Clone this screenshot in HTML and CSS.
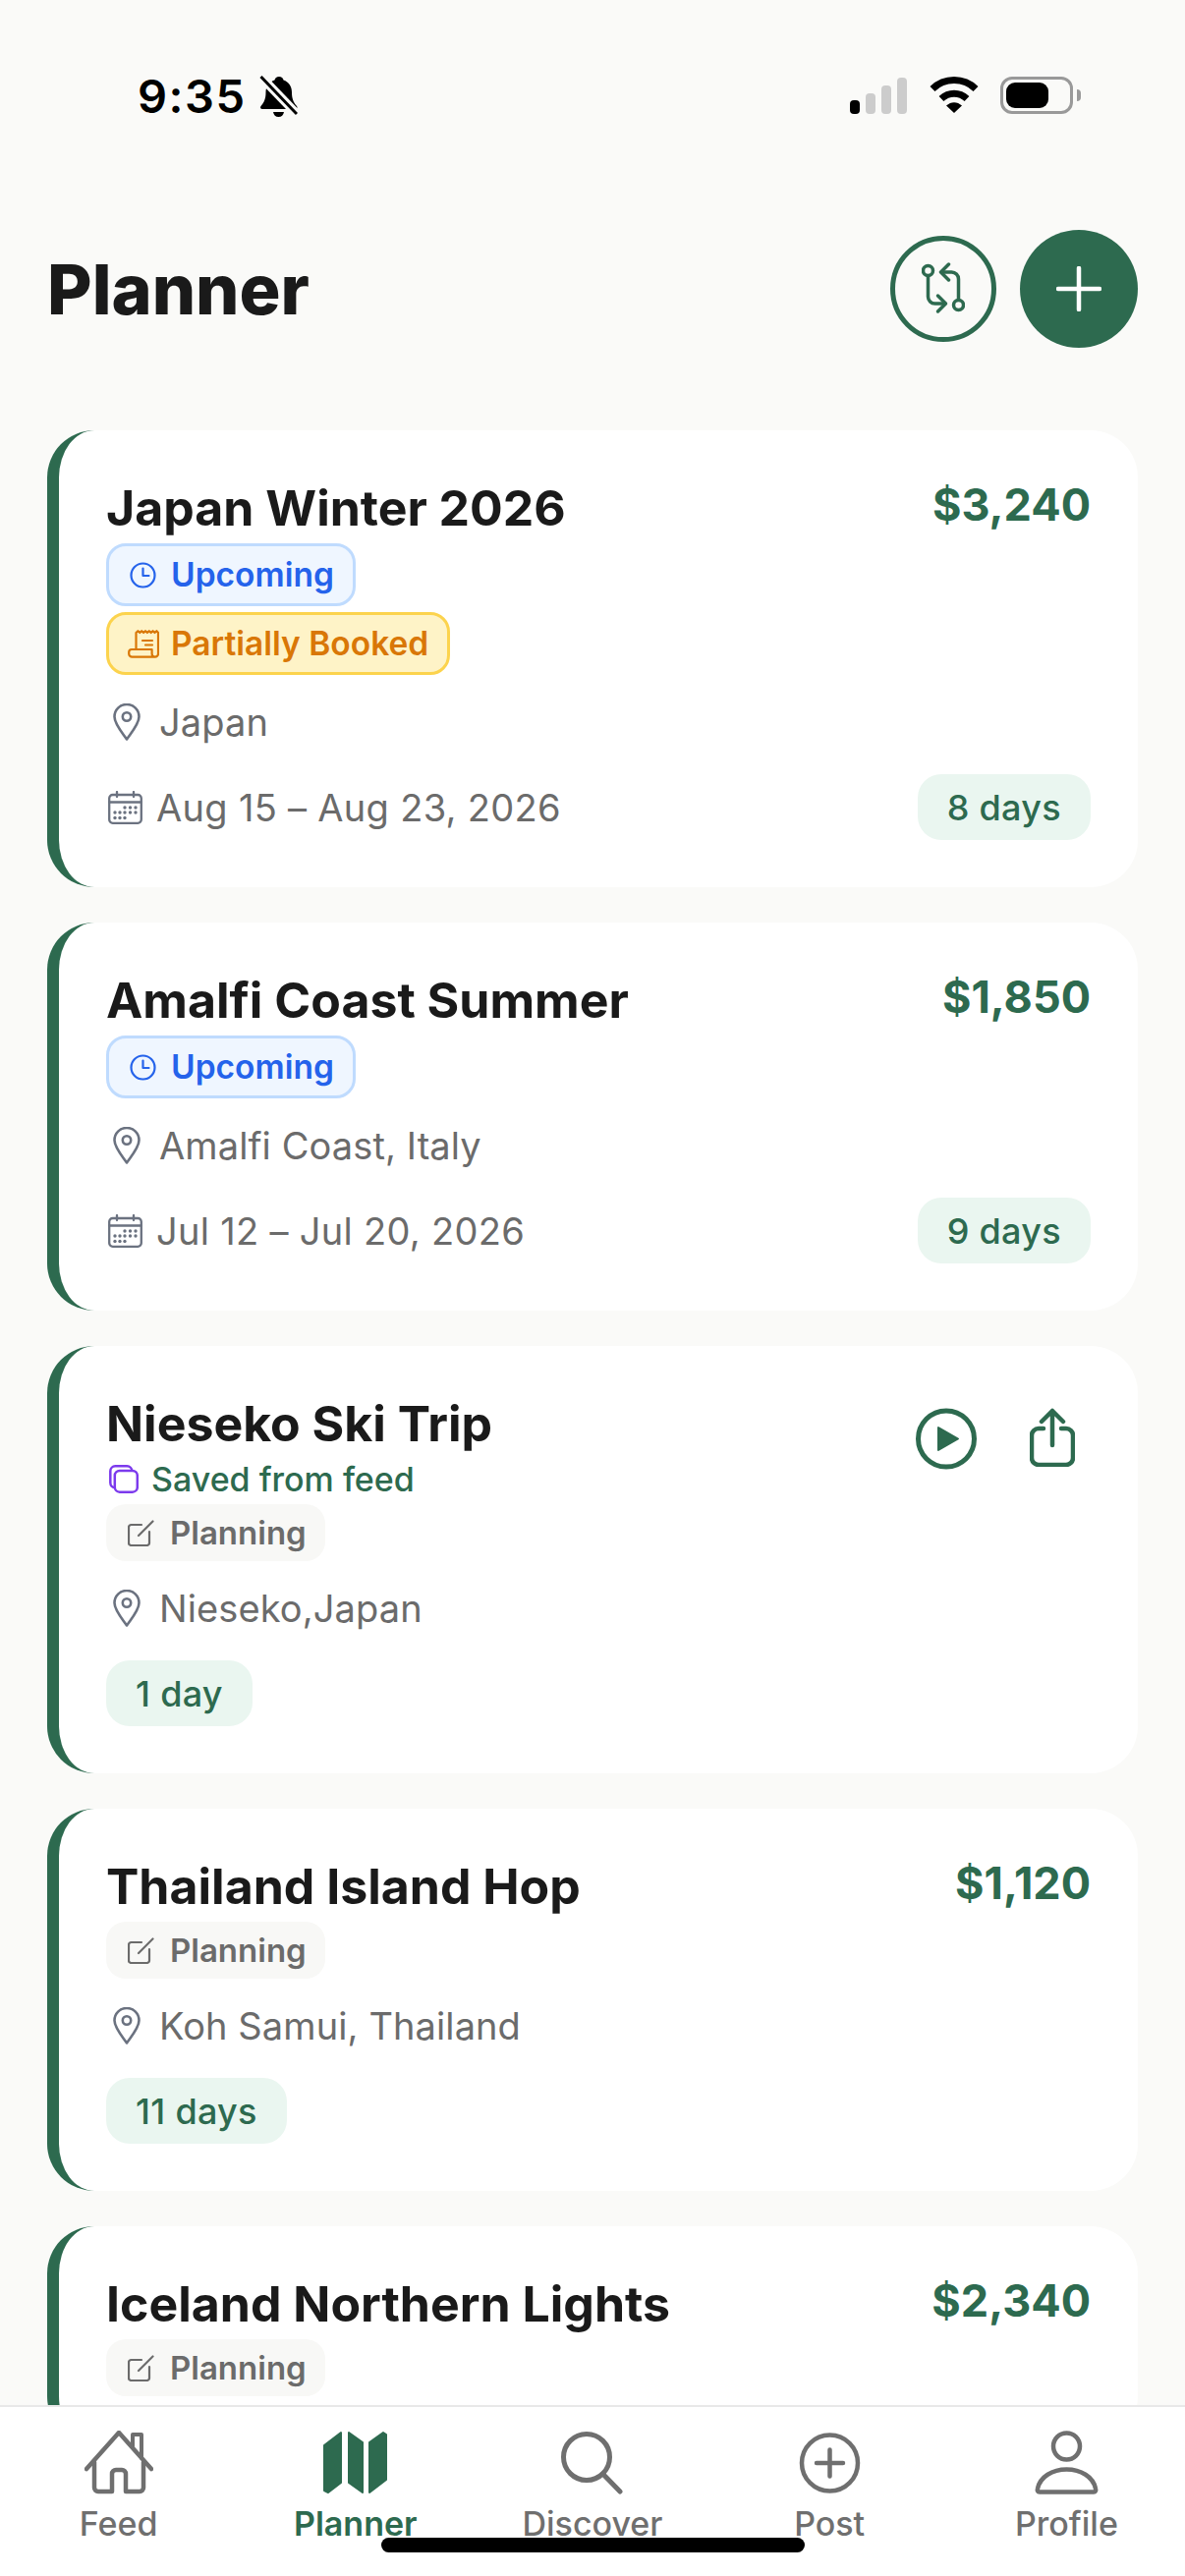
FILE: index.html
```html
<!DOCTYPE html>
<html lang="en">
<head>
    <meta charset="UTF-8">
    <meta name="viewport" content="width=device-width, initial-scale=1.0">
    <title>Planner</title>
    <link rel="stylesheet" href="styles.css">
</head>
<body>
<svg class="icon-defs" width="0" height="0">
    <symbol id="i-clock" viewBox="0 0 27 27">
        <circle cx="13.5" cy="13.5" r="12" fill="none" stroke="currentColor" stroke-width="2.2"/>
        <path d="M13.5 6.5v7.5h6" fill="none" stroke="currentColor" stroke-width="2.2" stroke-linecap="round" stroke-linejoin="round"/>
    </symbol>
    <symbol id="i-receipt" viewBox="0 0 32 29">
        <path d="M8.5 20V3l1.9-1.8L12.300 3l1.900-1.800L16.100 3 18 1.200 19.900 3l1.900-1.800L23.700 3l1.900-1.800L27.500 3l1.900-1.800L31 3v21.500a3.200 3.200 0 0 1-6.400 0V20H4a2.800 2.800 0 0 0-2.800 2.800v1.700A3.200 3.200 0 0 0 4.400 27.700h23.400" fill="none" stroke="currentColor" stroke-width="2.200" stroke-linejoin="round" stroke-linecap="round"/>
        <path d="M15 11h10M18 15.500h7" fill="none" stroke="currentColor" stroke-width="2.200" stroke-linecap="round"/>
    </symbol>
    <symbol id="i-edit" viewBox="0 0 27 27">
        <path d="M14 5H3.500A2.500 2.500 0 0 0 1 7.500v16A2.500 2.500 0 0 0 3.500 26h16a2.500 2.500 0 0 0 2.500-2.500V12" fill="none" stroke="currentColor" stroke-width="2.200" stroke-linecap="round"/>
        <path d="M11 16 25.500 1.500" fill="none" stroke="currentColor" stroke-width="2.200" stroke-linecap="round"/>
    </symbol>
    <symbol id="i-pin" viewBox="0 0 28 38">
        <path d="M14 36.500C10 30.500 1.500 21 1.500 13.500a12.500 12.500 0 0 1 25 0C26.500 21 18 30.500 14 36.500Z" fill="none" stroke="currentColor" stroke-width="2.600" stroke-linejoin="round"/>
        <circle cx="14" cy="13.500" r="4.200" fill="none" stroke="currentColor" stroke-width="2.600"/>
    </symbol>
    <symbol id="i-calendar" viewBox="0 0 35 34">
        <rect x="1.200" y="4" width="32.600" height="28.800" rx="3.500" fill="none" stroke="currentColor" stroke-width="2.300"/>
        <path d="M1.500 11.500h32M9 1v5M26 1v5" fill="none" stroke="currentColor" stroke-width="2.300" stroke-linecap="round"/>
        <g fill="currentColor">
            <circle cx="17" cy="17" r="1.700"/><circle cx="22.500" cy="17" r="1.700"/><circle cx="28" cy="17" r="1.700"/>
            <circle cx="7" cy="22" r="1.700"/><circle cx="12" cy="22" r="1.700"/><circle cx="17" cy="22" r="1.700"/><circle cx="22.500" cy="22" r="1.700"/><circle cx="28" cy="22" r="1.700"/>
            <circle cx="7" cy="27.500" r="1.700"/><circle cx="12" cy="27.500" r="1.700"/><circle cx="17" cy="27.500" r="1.700"/>
        </g>
    </symbol>
</svg>

<div class="phone">
    <div class="status-bar">
        <div class="status-left">
            <span class="time">9:35</span>
            <svg class="bell" viewBox="0 0 39 43">
                <path d="M20 1c2.500 0 4 1.500 4.500 3.500C30 6.500 33 11 33 17c0 6 1.500 10 5 14 1 1.500.5 3-1.500 3H3c-2 0-2.500-1.500-1.500-3C5 27 6.500 23 6.500 17 6.500 11 10 6.500 15.500 4.500 16 2.500 17.500 1 20 1ZM14 37h11c-.5 3-2.500 5-5.500 5S14.500 40 14 37Z" fill="#000"/>
                <path d="M1.500 1 38 39" stroke="#fafaf8" stroke-width="9"/>
                <path d="M1.500 1 38 39" stroke="#000" stroke-width="3"/>
            </svg>
        </div>
        <div class="status-right">
            <div class="signal">
                <span class="bar bar-on bar-1"></span>
                <span class="bar bar-2"></span>
                <span class="bar bar-3"></span>
                <span class="bar bar-4"></span>
            </div>
            <svg class="wifi" viewBox="0 0 50 37">
                <path d="M3 12.500C15 .5 35 .5 47 12.500" fill="none" stroke="#000" stroke-width="7"/>
                <path d="M12 22.500c7.500-7 18.500-7 26 0" fill="none" stroke="#000" stroke-width="7"/>
                <path d="M25 37 17 29.500c5-4.500 11-4.500 16 0Z" fill="#000"/>
            </svg>
            <div class="battery"><span class="battery-fill"></span></div>
            <span class="battery-tip"></span>
        </div>
    </div>

    <header class="page-header">
        <h1>Planner</h1>
        <div class="header-actions">
            <button class="btn-swap">
                <svg width="44" height="54" viewBox="0 0 44 54" fill="none" stroke="#2d6a4f" stroke-width="3.500" stroke-linecap="round" stroke-linejoin="round">
                    <circle cx="6.500" cy="8.500" r="5"/>
                    <circle cx="37.500" cy="43.500" r="5"/>
                    <path d="M6.500 14v21a7 7 0 0 0 7 7h10"/>
                    <path d="M16.500 34l8 8-8 8"/>
                    <path d="M37.500 38V17a7 7 0 0 0-7-7h-10"/>
                    <path d="M27.500 2l-8 8 8 8"/>
                </svg>
            </button>
            <button class="btn-add">
                <svg width="46" height="46" viewBox="0 0 46 46" fill="none" stroke="#fff" stroke-width="4.500" stroke-linecap="round"><path d="M23 2v42M2 23h42"/></svg>
            </button>
        </div>
    </header>

    <main class="trip-list">
        <div class="trip-card">
            <div class="trip-top">
                <div class="trip-info">
                    <h2>Japan Winter 2026</h2>
                    <span class="badge badge-blue"><svg class="badge-icon"><use href="#i-clock" width="27" height="27" x="2" y="2"/></svg>Upcoming</span>
                    <span class="badge badge-amber"><svg class="badge-icon"><use href="#i-receipt" width="32" height="29" y="1"/></svg>Partially Booked</span>
                </div>
                <div class="price">$3,240</div>
            </div>
            <div class="trip-location"><svg class="pin"><use href="#i-pin"/></svg>Japan</div>
            <div class="trip-bottom">
                <div class="trip-dates"><svg class="cal"><use href="#i-calendar"/></svg>Aug 15 – Aug 23, 2026</div>
                <span class="days">8 days</span>
            </div>
        </div>

        <div class="trip-card">
            <div class="trip-top">
                <div class="trip-info">
                    <h2>Amalfi Coast Summer</h2>
                    <span class="badge badge-blue"><svg class="badge-icon"><use href="#i-clock" width="27" height="27" x="2" y="2"/></svg>Upcoming</span>
                </div>
                <div class="price">$1,850</div>
            </div>
            <div class="trip-location"><svg class="pin"><use href="#i-pin"/></svg>Amalfi Coast, Italy</div>
            <div class="trip-bottom">
                <div class="trip-dates"><svg class="cal"><use href="#i-calendar"/></svg>Jul 12 – Jul 20, 2026</div>
                <span class="days">9 days</span>
            </div>
        </div>

        <div class="trip-card">
            <div class="trip-top">
                <div class="trip-info">
                    <h2>Nieseko Ski Trip</h2>
                    <div class="saved">
                        <svg width="30" height="29" viewBox="0 0 30 29" fill="none" stroke="#7c3aed" stroke-width="2.500">
                            <rect x="1.300" y="1.300" width="22" height="22" rx="5"/>
                            <rect x="5.800" y="6" width="23" height="21.700" rx="5" fill="#fff"/>
                        </svg>
                        Saved from feed
                    </div>
                    <span class="badge badge-grey"><svg class="badge-icon"><use href="#i-edit" width="27" height="27" y="2"/></svg>Planning</span>
                </div>
                <div class="trip-actions">
                    <svg width="62" height="63" viewBox="0 0 62 63">
                        <circle cx="31" cy="31.500" r="28.500" fill="none" stroke="#2d6a4f" stroke-width="5"/>
                        <path d="M23 20v23l20-11.500Z" fill="#2d6a4f" stroke="#2d6a4f" stroke-width="2" stroke-linejoin="round"/>
                    </svg>
                    <svg width="46" height="60" viewBox="0 0 46 60" fill="none" stroke="#2d6a4f" stroke-width="4.500" stroke-linecap="round" stroke-linejoin="round">
                        <path d="M14 21H9a7 7 0 0 0-7 7v23a7 7 0 0 0 7 7h28a7 7 0 0 0 7-7V28a7 7 0 0 0-7-7h-5"/>
                        <path d="M23 38V3M12 14 23 3l11 11"/>
                    </svg>
                </div>
            </div>
            <div class="trip-location"><svg class="pin"><use href="#i-pin"/></svg>Nieseko,Japan</div>
            <div class="trip-bottom">
                <span class="days">1 day</span>
            </div>
        </div>

        <div class="trip-card">
            <div class="trip-top">
                <div class="trip-info">
                    <h2>Thailand Island Hop</h2>
                    <span class="badge badge-grey"><svg class="badge-icon"><use href="#i-edit" width="27" height="27" y="2"/></svg>Planning</span>
                </div>
                <div class="price">$1,120</div>
            </div>
            <div class="trip-location"><svg class="pin"><use href="#i-pin"/></svg>Koh Samui, Thailand</div>
            <div class="trip-bottom">
                <span class="days">11 days</span>
            </div>
        </div>

        <div class="trip-card">
            <div class="trip-top">
                <div class="trip-info">
                    <h2>Iceland Northern Lights</h2>
                    <span class="badge badge-grey"><svg class="badge-icon"><use href="#i-edit" width="27" height="27" y="2"/></svg>Planning</span>
                </div>
                <div class="price">$2,340</div>
            </div>
        </div>
    </main>

    <nav class="tab-bar">
        <div class="tab">
            <svg width="70" height="65" viewBox="0 0 70 65" fill="none" stroke="currentColor" stroke-width="4.500" stroke-linecap="round" stroke-linejoin="round">
                <path d="M2 39 35 2l33 37"/>
                <path d="M49 16V4h9v24" stroke-width="4"/>
                <path d="M10 32v26a4 4 0 0 0 4 4h14V44a4 4 0 0 1 4-4h6a4 4 0 0 1 4 4v18h14a4 4 0 0 0 4-4V32"/>
            </svg>
            <span>Feed</span>
        </div>
        <div class="tab tab-active">
            <svg width="65" height="65" viewBox="0 0 65 65" fill="currentColor" stroke="currentColor" stroke-width="2" stroke-linejoin="round">
                <path d="M18 2v51L5 63l-4-2V15Z"/>
                <path d="M26 2l14 10v51L26 53Z"/>
                <path d="M47 12l14-10 3 2v46L47 63Z"/>
            </svg>
            <span>Planner</span>
        </div>
        <div class="tab">
            <svg width="65" height="65" viewBox="0 0 65 65" fill="none" stroke="currentColor" stroke-width="5" stroke-linecap="round">
                <circle cx="27" cy="27" r="23.500"/>
                <path d="M43.500 44 61 62"/>
            </svg>
            <span>Discover</span>
        </div>
        <div class="tab">
            <svg width="65" height="65" viewBox="0 0 65 65" fill="none" stroke="currentColor" stroke-width="4.500" stroke-linecap="round">
                <circle cx="32.500" cy="33" r="28.500"/>
                <path d="M32.500 19.500v27M19 33h27"/>
            </svg>
            <span>Post</span>
        </div>
        <div class="tab">
            <svg width="65" height="65" viewBox="0 0 65 65" fill="none" stroke="currentColor" stroke-width="4.500" stroke-linejoin="round">
                <circle cx="32.500" cy="16" r="13.500"/>
                <path d="M5 62.500C3 62.500 2.500 61 3 59c2.500-12 15-19.500 29.500-19.500S59.500 47 62 59c.5 2 0 3.500-2 3.500Z"/>
            </svg>
            <span>Profile</span>
        </div>
        <span class="home-indicator"></span>
    </nav>
</div>
</body>
</html>
```

FILE: styles.css
```css
/* Page */
* {
    box-sizing: border-box;
}

body {
    margin: 0;
    font-family: Inter, "Noto Sans", sans-serif;
    background-color: #fafaf8;
    color: #1a1a1a;
}

.icon-defs {
    position: absolute;
}

.phone {
    width: 1206px;
    height: 2622px;
    display: flex;
    flex-direction: column;
    overflow: hidden;
}

/* Status bar */
.status-bar {
    height: 234px;
    padding: 77px 106px 0 140px;
    display: flex;
    justify-content: space-between;
    align-items: flex-start;
}

.status-left {
    display: flex;
    align-items: flex-start;
    gap: 13px;
}

.time {
    margin-top: 2px;
    font-size: 47px;
    font-weight: 600;
    line-height: 38px;
    letter-spacing: 1.5px;
    color: #000;
}

.bell {
    width: 39px;
    height: 43px;
}

.status-right {
    display: flex;
    align-items: flex-start;
    padding-top: 1px;
}

.signal {
    display: flex;
    align-items: flex-end;
    gap: 6px;
    height: 38px;
    margin-right: 23px;
}

.bar {
    width: 10px;
    border-radius: 4px;
    background-color: #ccc;
}

.bar-on {
    background-color: #000;
}

.bar-1 { height: 14px; }
.bar-2 { height: 21px; }
.bar-3 { height: 29px; }
.bar-4 { height: 37px; }

.wifi {
    width: 50px;
    height: 37px;
    margin-right: 22px;
}

.battery {
    width: 74px;
    height: 38px;
    padding: 3px;
    border: 3px solid #999;
    border-radius: 12px;
}

.battery-fill {
    display: block;
    width: 43px;
    height: 26px;
    border-radius: 9px;
    background-color: #000;
}

.battery-tip {
    width: 4px;
    height: 12px;
    margin: 13px 0 0 4px;
    border-radius: 0 6px 6px 0;
    background-color: #999;
}

/* Header */
.page-header {
    height: 120px;
    padding: 0 48px;
    display: flex;
    justify-content: space-between;
    align-items: center;
}

.page-header h1 {
    margin: 0;
    font-size: 70px;
    font-weight: 800;
}

.header-actions {
    display: flex;
    align-items: center;
    gap: 24px;
}

.btn-swap,
.btn-add {
    display: flex;
    justify-content: center;
    align-items: center;
    padding: 0;
    border-radius: 50%;
}

.btn-swap {
    width: 108px;
    height: 108px;
    border: 5px solid #2d6a4f;
    background-color: transparent;
}

.btn-add {
    width: 120px;
    height: 120px;
    border: none;
    background-color: #2d6a4f;
}

/* Trip cards */
.trip-list {
    flex: 1;
    min-height: 0;
    overflow: hidden;
    padding: 84px 48px 0;
    display: flex;
    flex-direction: column;
    gap: 36px;
}

.trip-card {
    flex-shrink: 0;
    padding: 48px;
    background-color: #fff;
    border-left: 12px solid #2d6a4f;
    border-radius: 48px;
}

.trip-top {
    display: flex;
    justify-content: space-between;
    align-items: flex-start;
}

.trip-info {
    display: flex;
    flex-direction: column;
    align-items: flex-start;
    gap: 6px;
}

.trip-info h2 {
    margin: 2px 0 1px;
    font-size: 50px;
    font-weight: 700;
    line-height: 58px;
}

.price {
    font-size: 45px;
    font-weight: 700;
    color: #2d6a4f;
}

.badge {
    display: inline-flex;
    align-items: center;
    gap: 12px;
    height: 64px;
    padding: 0 19px;
    border-width: 3px;
    border-style: solid;
    border-radius: 20px;
    font-size: 33.5px;
    font-weight: 600;
}

.badge-icon {
    width: 32px;
    height: 31px;
}

.badge-blue {
    background-color: #eff6ff;
    border-color: #bfdbfe;
    color: #2563eb;
}

.badge-amber {
    background-color: #fef3c7;
    border-color: #fcd34d;
    color: #d97706;
}

.badge-grey {
    height: 58px;
    gap: 11px;
    padding: 0 19px 0 22px;
    border: none;
    background-color: #f8f8f6;
    font-size: 33px;
    color: #6b6b6b;
}

.saved {
    display: flex;
    align-items: center;
    gap: 13px;
    height: 40px;
    margin-left: 3px;
    font-size: 34px;
    font-weight: 500;
    color: #2d6a4f;
}

.trip-actions {
    display: flex;
    align-items: flex-start;
    gap: 54px;
    margin: 15px 16px 0 0;
}

.trip-location {
    display: flex;
    align-items: center;
    height: 44px;
    margin-top: 26px;
    padding-left: 7px;
    font-size: 38px;
    letter-spacing: 0.1px;
    color: #6b6b6b;
}

.pin {
    width: 28px;
    height: 38px;
    margin-right: 19px;
    color: #6b7280;
}

.trip-bottom {
    display: flex;
    justify-content: space-between;
    align-items: center;
    margin-top: 31px;
}

.trip-dates {
    display: flex;
    align-items: center;
    font-size: 38px;
    letter-spacing: 0.3px;
    color: #6b6b6b;
}

.cal {
    width: 35px;
    height: 34px;
    margin: 0 14px 0 2px;
    color: #6b7280;
}

.days {
    display: inline-flex;
    align-items: center;
    height: 67px;
    padding: 0 30px;
    border-radius: 24px;
    background-color: #eaf6f0;
    font-size: 36px;
    font-weight: 500;
    letter-spacing: 0.3px;
    color: #2d6a4f;
}

/* Tab bar */
.tab-bar {
    position: relative;
    flex-shrink: 0;
    height: 174px;
    padding-top: 24px;
    display: grid;
    grid-template-columns: repeat(5, 1fr);
    background-color: #fff;
    border-top: 2px solid #e8e8e8;
}

.tab {
    display: flex;
    flex-direction: column;
    align-items: center;
    gap: 9px;
    font-size: 34px;
    font-weight: 500;
    color: #6f6f6f;
}

.tab-active {
    font-weight: 600;
    color: #2d6a4f;
}

.home-indicator {
    position: absolute;
    left: 388px;
    bottom: 24px;
    width: 431px;
    height: 15px;
    border-radius: 8px;
    background-color: #000;
}
```
